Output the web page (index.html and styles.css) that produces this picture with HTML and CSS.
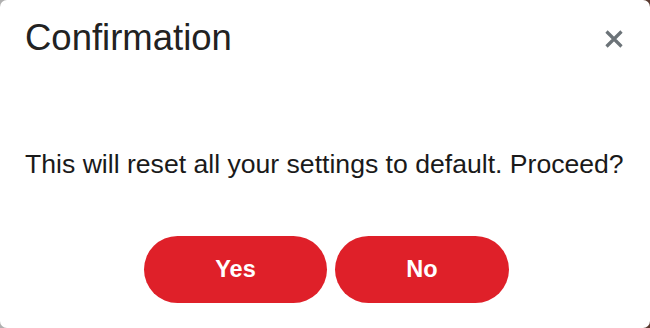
FILE: index.html
```html
<!DOCTYPE html>
<html lang="en">
<head>
<meta charset="utf-8">
<title>Confirmation</title>
<link rel="stylesheet" href="styles.css">
</head>
<body>
<div class="modal">
  <div class="modal-header">
    <h1 class="modal-title">Confirmation</h1>
    <button class="close-btn" aria-label="Close">
      <svg width="20" height="20" viewBox="0 0 20 20"><path d="M2.5 2.5 L17.5 17.5 M17.5 2.5 L2.5 17.5" stroke="#6c7378" stroke-width="3.2" stroke-linecap="butt" fill="none"/></svg>
    </button>
  </div>
  <div class="modal-body">
    <p class="message">This will reset all your settings to default. Proceed?</p>
  </div>
  <div class="modal-footer">
    <button class="btn btn-yes">Yes</button>
    <button class="btn btn-no">No</button>
  </div>
</div>
</body>
</html>
```
FILE: styles.css
```css
html {
  background: linear-gradient(90deg, #b0b0b0 0%, #8a8a8a 50%, #5a3a30 100%);
}
body {
  margin: 0;
  font-family: "Liberation Sans", Arial, sans-serif;
}
.modal {
  height: 328px;
  box-sizing: border-box;
  background: #ffffff;
  border-radius: 7px;
  display: flex;
  flex-direction: column;
}
.modal-header {
  display: flex;
  justify-content: space-between;
  align-items: center;
  padding: 16px 26px 0 25px;
}
.modal-title {
  margin: 0;
  font-size: 36.5px;
  font-weight: normal;
  line-height: 44px;
  color: #222222;
}
.close-btn {
  border: none;
  background: none;
  padding: 0;
  width: 20px;
  height: 20px;
  display: flex;
  margin-top: 2px;
}
.modal-body {
  padding: 0 20px 0 25px;
  margin-top: 88px;
}
.message {
  margin: 0;
  font-size: 26.6px;
  line-height: 32px;
  white-space: nowrap;
  color: #1a1a1a;
}
.modal-footer {
  display: flex;
  justify-content: center;
  gap: 8px;
  margin-top: 56px;
  padding-left: 3px;
}
.btn {
  height: 67px;
  border: none;
  border-radius: 34px;
  background: #df2029;
  color: #ffffff;
  font-family: "Liberation Sans", Arial, sans-serif;
  font-weight: bold;
  font-size: 23.5px;
}
.btn-yes {
  width: 183px;
}
.btn-no {
  width: 174px;
}
```
